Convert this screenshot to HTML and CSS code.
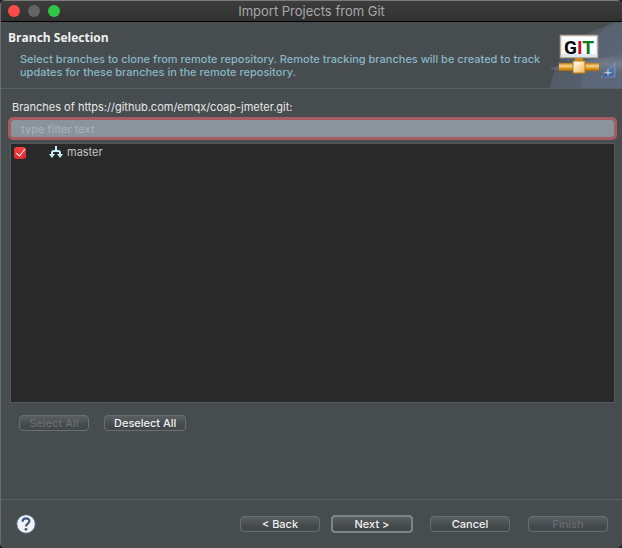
FILE: index.html
```html
<!DOCTYPE html>
<html lang="en">
<head>
    <meta charset="UTF-8">
    <meta name="viewport" content="width=device-width, initial-scale=1.0">
    <title>Import Projects from Git</title>
    <link rel="stylesheet" href="styles.css">
</head>
<body>
    <div class="window">
        <div class="titlebar">
            <div class="lights">
                <button class="light close" aria-label="Close"></button>
                <button class="light minimize" aria-label="Minimize" disabled></button>
                <button class="light zoom" aria-label="Zoom"></button>
            </div>
            <div class="title">Import Projects from Git</div>
        </div>

        <header class="banner">
            <div class="banner-text">
                <h1>Branch Selection</h1>
                <p>Select branches to clone from remote repository. Remote tracking branches will be created to track updates for these branches in the remote repository.</p>
            </div>
            <svg class="banner-art" width="75" height="66" viewBox="0 0 75 66" aria-hidden="true">
                <defs>
                    <linearGradient id="sky" x1="0" y1="0" x2="1" y2="1">
                        <stop offset="0" stop-color="#4b5154"/>
                        <stop offset="0.5" stop-color="#545c67"/>
                        <stop offset="1" stop-color="#59647a"/>
                    </linearGradient>
                    <linearGradient id="beam" x1="0" y1="0" x2="0" y2="1">
                        <stop offset="0" stop-color="#8d949b" stop-opacity="0"/>
                        <stop offset="0.5" stop-color="#8d949b" stop-opacity="0.5"/>
                        <stop offset="1" stop-color="#8d949b" stop-opacity="0"/>
                    </linearGradient>
                    <linearGradient id="pipe" x1="0" y1="0" x2="0" y2="1">
                        <stop offset="0" stop-color="#b9770f"/>
                        <stop offset="0.35" stop-color="#fbd580"/>
                        <stop offset="0.7" stop-color="#dd951f"/>
                        <stop offset="1" stop-color="#a5660a"/>
                    </linearGradient>
                    <linearGradient id="joint" x1="0" y1="0" x2="1" y2="1">
                        <stop offset="0.2" stop-color="#fff6e4"/>
                        <stop offset="1" stop-color="#f0b04c"/>
                    </linearGradient>
                    <linearGradient id="corner" x1="0" y1="1" x2="1" y2="0">
                        <stop offset="0" stop-color="#2d4b7c"/>
                        <stop offset="1" stop-color="#6b8cc2"/>
                    </linearGradient>
                </defs>
                <path d="M3 66C8 34 30 8 75 0v66z" fill="url(#sky)"/>
                <path d="M34 66C36 40 45 16 64 0h11v66z" fill="#6a7790" opacity="0.25"/>
                <path d="M4 46L75 32v20L4 48z" fill="url(#beam)"/>
                <rect x="13.5" y="13.5" width="37" height="22" fill="#fbfdff" stroke="#b3ada0" stroke-width="1.5"/>
                <path d="M15 32h34v3H15z" fill="#dfe7ef"/>
                <text class="logo-text" x="17" y="32"><tspan fill="#080808">G</tspan><tspan fill="#c8102e">I</tspan><tspan fill="#0c7a1e">T</tspan></text>
                <rect x="28" y="36" width="8" height="4" fill="#d38d1e"/>
                <rect x="12" y="41" width="40" height="8" fill="url(#pipe)"/>
                <rect x="26" y="39" width="12" height="12" fill="url(#joint)" stroke="#bb790f"/>
                <path d="M54 55L68 41v14z" fill="url(#corner)" stroke="#8aa5d2" stroke-width="0.6"/>
                <path d="M61 46l.7 4 4 .8-4 .8-.7 3.4-.7-3.4-4-.8 4-.8z" fill="#d7e6fb" opacity="0.85"/>
            </svg>
        </header>

        <main class="content">
            <label for="filter">Branches of https://github.com/emqx/coap-jmeter.git:</label>
            <input type="text" id="filter" class="filter" placeholder="type filter text">
            <div class="branches">
                <div class="branch">
                    <input type="checkbox" id="master" checked>
                    <label for="master">
                        <svg width="14" height="13" viewBox="0 0 14 13" aria-hidden="true">
                            <path d="M7 0v5M3 9V7q0-2 2-2h4q2 0 2 2v2" fill="none" stroke="#c4eef2" stroke-width="2"/>
                            <path d="M0 8h6l-3 4zM8 8h6l-3 4z" fill="#c4eef2"/>
                        </svg>
                        master
                    </label>
                </div>
            </div>
            <div class="selection">
                <button class="btn" disabled>Select All</button>
                <button class="btn">Deselect All</button>
            </div>
        </main>

        <footer class="footer">
            <button class="help" aria-label="Help">
                <svg width="20" height="20" viewBox="0 0 20 20" aria-hidden="true">
                    <circle cx="10" cy="10" r="9.3" fill="#f1f2f4" stroke="#4b6288"/>
                    <path d="M6.6 7.8C6.6 3.2 13.5 3.4 13.4 7.2C13.3 9.6 10 9.5 10 12.4" fill="none" stroke="#3e5780" stroke-width="2.2"/>
                    <circle cx="10" cy="15.3" r="1.4" fill="#3e5780"/>
                </svg>
            </button>
            <div class="actions">
                <button class="btn">&lt; Back</button>
                <button class="btn default">Next &gt;</button>
                <button class="btn">Cancel</button>
                <button class="btn" disabled>Finish</button>
            </div>
        </footer>
    </div>
</body>
</html>
```

FILE: styles.css
```css
* {
    box-sizing: border-box;
}
body {
    margin: 0;
    background-color: #1c1e1f;
    color: #e6e8e8;
    font-family: Inter, "Liberation Sans", sans-serif;
    font-size: 11px;
    line-height: 13px;
}
.window {
    display: flex;
    flex-direction: column;
    min-height: 100vh;
    background-color: #474c4e;
    border-left: 1px solid #686c6e;
    border-radius: 5px;
    overflow: hidden;
}
.titlebar {
    position: relative;
    display: flex;
    align-items: center;
    height: 22px;
    background: linear-gradient(#3d3d3d, #313131);
    border-top: 1px solid #7a7a7a;
    border-bottom: 1px solid #000;
}
.lights {
    display: flex;
    gap: 8px;
    padding-left: 7px;
}
.light {
    width: 12px;
    height: 12px;
    padding: 0;
    border: none;
    border-radius: 50%;
}
.close {
    background-color: #fc4b48;
}
.minimize {
    background-color: #656565;
}
.zoom {
    background-color: #2fc745;
}
.title {
    position: absolute;
    left: 0;
    right: 0;
    text-align: center;
    font-size: 13px;
    line-height: 20px;
    color: #a8a8a8;
    pointer-events: none;
}
.banner {
    display: flex;
    justify-content: space-between;
    height: 67px;
    border-bottom: 1px solid #5d6163;
}
.banner-text {
    padding: 8px 0 0 7px;
}
h1 {
    margin: 0;
    font-family: "Open Sans", sans-serif;
    font-size: 12px;
    line-height: 16px;
    font-weight: bold;
    color: #f0f0f0;
}
.banner p {
    margin: 7px 0 0 12px;
    font-weight: 500;
    color: #88b7c7;
}
.banner-art {
    flex: none;
}
.logo-text {
    font-family: Roboto, sans-serif;
    font-size: 19px;
    font-weight: bold;
}
.content {
    flex: 1;
    display: flex;
    flex-direction: column;
    padding: 12px 7px 68px 9px;
}
.content > label {
    padding-left: 2px;
}
.filter {
    height: 17px;
    margin: 6px 1px 0;
    padding: 0 10px;
    background-color: #89959b;
    border: none;
    border-radius: 2px;
    outline: 3px solid #a65c62;
    font: inherit;
    font-weight: 500;
    color: #222;
}
.filter::placeholder {
    color: #a4afb5;
    opacity: 1;
}
.branches {
    flex: 1;
    margin-top: 6px;
    padding: 2px 3px;
    background-color: #292929;
    border: 1px solid #555859;
}
.branch {
    display: flex;
    align-items: center;
    height: 13px;
    gap: 23px;
}
.branch input {
    appearance: none;
    display: grid;
    place-items: center;
    width: 12px;
    height: 12px;
    margin: 0;
    border-radius: 3px;
    background: linear-gradient(#f5403f, #df2a30);
}
.branch input:checked::before {
    content: "";
    width: 4px;
    height: 8px;
    margin-bottom: 2px;
    border: solid #fff;
    border-width: 0 1px 1px 0;
    transform: rotate(38deg);
}
.branch label {
    display: flex;
    align-items: center;
    gap: 4px;
    color: #c3c3c3;
}
.selection {
    display: flex;
    gap: 15px;
    padding: 12px 9px 0;
}
.btn {
    min-width: 70px;
    height: 16px;
    padding: 0 9px;
    background: linear-gradient(#5a5f61, #43484a 70%);
    border: 1px solid #696e70;
    border-radius: 4px;
    font: inherit;
    line-height: 14px;
    font-weight: 500;
    color: #f0f0f0;
}
.btn:disabled {
    color: #696d6f;
}
.footer {
    display: flex;
    align-items: center;
    justify-content: space-between;
    height: 49px;
    padding: 0 14px 0 15px;
    border-top: 1px solid #5d6163;
}
.help {
    height: 20px;
    padding: 0;
    border: none;
    background: none;
}
.actions {
    display: flex;
    align-items: center;
    gap: 18px;
}
.actions .btn {
    width: 80px;
}
.actions .default {
    width: 82px;
    height: 18px;
    margin: 0 -1px 0 -7px;
    border: 2px solid #7f8486;
}
```
